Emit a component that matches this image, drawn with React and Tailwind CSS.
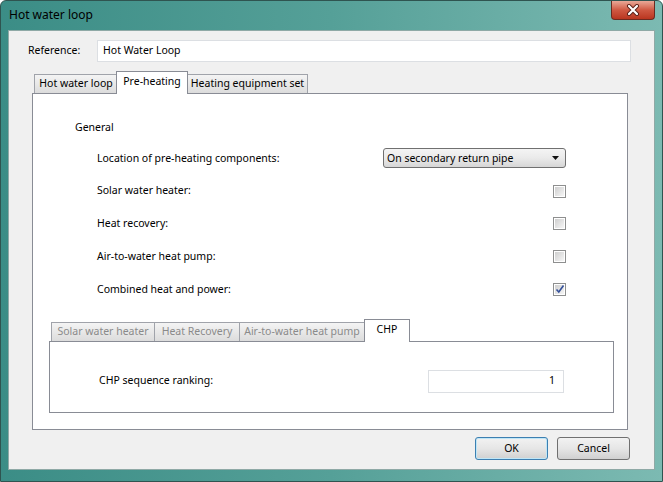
import React from 'react'

function Tab({ label, width, active, muted }) {
    if (active) {
        return (
            <div className={`relative z-10 -mb-px flex h-[23px] items-center justify-center border border-b-0 border-[#898c95] bg-white pb-[2px] ${width}`}>
                <span className="text-black">{label}</span>
            </div>
        )
    }
    return (
        <div className={`-mr-px flex h-[19px] items-center justify-center border border-b-0 border-[#a0a3aa] bg-gradient-to-b from-[#f4f4f4] to-[#dcdcdc] ${width}`}>
            <span className={muted ? 'text-[#8a8a8a]' : 'text-black'}>{label}</span>
        </div>
    )
}

function CheckBox({ checked }) {
    return (
        <div className="flex h-[13px] w-[13px] items-center justify-center border border-[#8e8f8f] bg-white">
            <div className="relative h-[9px] w-[9px] bg-gradient-to-br from-[#cfcfcf] to-[#f6f6f6]">
                {checked && (
                    <svg className="absolute -left-[1px] -top-[2px]" width="12" height="12" viewBox="0 0 12 12">
                        <path d="M2.5 6.5 L4.8 9 L9.5 2.5" fill="none" stroke="#34509a" strokeWidth="1.6" />
                    </svg>
                )}
            </div>
        </div>
    )
}

function Row({ label, children }) {
    return (
        <div className="flex h-[32.75px] w-[533px] items-center justify-between pl-[64px]">
            <span>{label}</span>
            {children}
        </div>
    )
}

export default function App() {
    return (
        <div className="flex h-[482px] w-[663px] flex-col overflow-hidden rounded-t-[6px] border border-[#2f5450] bg-gradient-to-r from-[#3b8d86] via-[#55a098] to-[#7cbab2] font-['Noto_Sans',sans-serif] text-[10.5px] text-black">
            {/* title bar */}
            <div className="flex h-[29px] items-start justify-between pl-[8px] pr-[7px]">
                <span className="mt-[6px] text-[12px] leading-[16px]">Hot water loop</span>
                <div className="flex h-[19px] w-[44px] items-center justify-center rounded-b-[4px] border border-t-0 border-[#6b2a20] bg-gradient-to-b from-[#e8a898] via-[#cf5842] to-[#b9351f]">
                    <svg width="14" height="12" viewBox="0 0 14 12">
                        <path d="M3 2 L11 10 M11 2 L3 10" stroke="#5a2018" strokeWidth="4" strokeLinecap="round" />
                        <path d="M3 2 L11 10 M11 2 L3 10" stroke="#ffffff" strokeWidth="2.2" strokeLinecap="round" />
                    </svg>
                </div>
            </div>

            {/* dialog body */}
            <div className="mx-[7px] mb-[11px] flex flex-1 flex-col border border-[#8fa9a6] bg-[#f0f0f0] pt-[9px]">
                <div className="flex h-[22px] items-center pl-[19px]">
                    <span className="w-[69px]">Reference:</span>
                    <div className="flex h-[22px] w-[534px] items-center border border-[#dcdfe3] bg-white pl-[5px]">Hot Water Loop</div>
                </div>

                <div className="ml-[25px] mt-[10px] flex h-[21px] items-end">
                    <Tab label="Hot water loop" width="w-[84px]" />
                    <Tab label="Pre-heating" width="w-[72px] -ml-px -mr-px" active />
                    <Tab label="Heating equipment set" width="w-[121px]" />
                </div>

                <div className="ml-[23px] flex h-[337px] w-[596px] flex-col border border-[#898c95] bg-white pt-[25px]">
                    <div className="ml-[42px] h-[16px] leading-[16px]">General</div>
                    <div className="mt-[7px] flex flex-col">
                        <Row label="Location of pre-heating components:">
                            <div className="flex h-[20px] w-[183px] items-center justify-between rounded-[3px] border border-[#707070] bg-gradient-to-b from-[#f4f4f4] via-[#eaeaea] to-[#d6d6d6] pl-[3px] pr-[6px]">
                                <span>On secondary return pipe</span>
                                <svg width="7" height="4" viewBox="0 0 7 4">
                                    <path d="M0 0 H7 L3.5 4 Z" fill="#111" />
                                </svg>
                            </div>
                        </Row>
                        <Row label="Solar water heater:"><CheckBox /></Row>
                        <Row label="Heat recovery:"><CheckBox /></Row>
                        <Row label="Air-to-water heat pump:"><CheckBox /></Row>
                        <Row label="Combined heat and power:"><CheckBox checked /></Row>
                    </div>

                    <div className="ml-[18px] mt-[14px] flex h-[21px] items-end">
                        <Tab label="Solar water heater" width="w-[104px]" muted />
                        <Tab label="Heat Recovery" width="w-[86px]" muted />
                        <Tab label="Air-to-water heat pump" width="w-[126px]" muted />
                        <Tab label="CHP" width="w-[46px]" active />
                    </div>
                    <div className="ml-[16px] h-[72px] w-[565px] border border-[#898c95] bg-white pt-[28px]">
                        <div className="flex h-[23px] items-center pl-[49px]">
                            <span className="w-[329px]">CHP sequence ranking:</span>
                            <div className="flex h-[23px] w-[136px] items-center justify-end border border-[#dcdfe3] bg-white pr-[8px]">1</div>
                        </div>
                    </div>
                </div>

                <div className="mt-[7px] flex justify-end gap-[9px] pr-[24px]">
                    <button className="flex h-[23px] w-[73px] items-center justify-center rounded-[3px] border border-[#3c7fb1] bg-gradient-to-b from-[#f2f2f2] via-[#e6e6e6] to-[#d0d0d0] shadow-[inset_0_0_0_1px_#bfe6f7]">OK</button>
                    <button className="flex h-[23px] w-[73px] items-center justify-center rounded-[3px] border border-[#707070] bg-gradient-to-b from-[#f2f2f2] via-[#e6e6e6] to-[#d0d0d0]">Cancel</button>
                </div>
            </div>
        </div>
    )
}
